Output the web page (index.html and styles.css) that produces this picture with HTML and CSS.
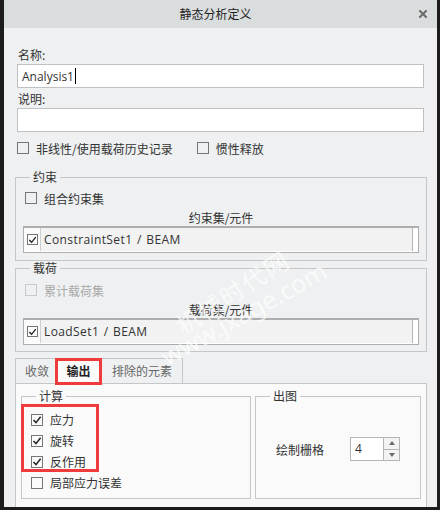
FILE: index.html
```html
<!DOCTYPE html>
<html lang="zh-CN">
<head>
    <meta charset="UTF-8">
    <meta name="viewport" content="width=device-width, initial-scale=1.0">
    <title>静态分析定义</title>
    <link rel="stylesheet" href="styles.css">
</head>
<body>
    <div class="dialog">
        <!-- Barra de título -->
        <div class="titlebar">
            <span></span>
            <span class="title">静态分析定义</span>
            <span class="close">
                <svg width="8" height="8" viewBox="0 0 8 8"><path d="M1 1 L7 7 M7 1 L1 7" stroke="#6a6a6a" stroke-width="2" stroke-linecap="square"/></svg>
            </span>
        </div>

        <div class="content">
            <div class="form-label">名称:</div>
            <div class="text-input">Analysis1<span class="caret"></span></div>
            <div class="form-label second">说明:</div>
            <div class="text-input"></div>

            <div class="options">
                <div class="check-row"><span class="box"></span>非线性/使用载荷历史记录</div>
                <div class="check-row"><span class="box"></span>惯性释放</div>
            </div>

            <!-- Grupo de restricciones -->
            <fieldset class="group first-group">
                <legend>约束</legend>
                <div class="group-body">
                    <div class="check-row"><span class="box"></span>组合约束集</div>
                    <div class="caption">约束集/元件</div>
                    <div class="list">
                        <div class="list-row">
                            <div class="cell-check"><span class="box checked"><svg width="10" height="10" viewBox="0 0 10 10"><path d="M1.5 5 L4 7.6 L8.6 1.8" fill="none" stroke="#222" stroke-width="1.5"/></svg></span></div>
                            <div class="cell-text">ConstraintSet1 / BEAM</div>
                        </div>
                    </div>
                </div>
            </fieldset>

            <!-- Grupo de cargas -->
            <fieldset class="group">
                <legend>载荷</legend>
                <div class="group-body second-body">
                    <div class="check-row disabled"><span class="box"></span>累计载荷集</div>
                    <div class="caption">载荷集/元件</div>
                    <div class="list">
                        <div class="list-row">
                            <div class="cell-check"><span class="box checked"><svg width="10" height="10" viewBox="0 0 10 10"><path d="M1.5 5 L4 7.6 L8.6 1.8" fill="none" stroke="#222" stroke-width="1.5"/></svg></span></div>
                            <div class="cell-text">LoadSet1 / BEAM</div>
                        </div>
                    </div>
                </div>
            </fieldset>

            <!-- Pestañas -->
            <div class="tabs">
                <div class="tab tab-1">收敛</div>
                <div class="tab tab-2 active">输出</div>
                <div class="tab tab-3">排除的元素</div>
            </div>
        </div>

        <div class="pane">
            <fieldset class="group calc-group">
                <legend>计算</legend>
                <div class="calc-body">
                    <div class="highlight">
                        <div class="check-row tall"><span class="box"><svg width="10" height="10" viewBox="0 0 10 10"><path d="M1.5 5 L4 7.6 L8.6 1.8" fill="none" stroke="#222" stroke-width="1.5"/></svg></span>应力</div>
                        <div class="check-row tall"><span class="box"><svg width="10" height="10" viewBox="0 0 10 10"><path d="M1.5 5 L4 7.6 L8.6 1.8" fill="none" stroke="#222" stroke-width="1.5"/></svg></span>旋转</div>
                        <div class="check-row tall"><span class="box"><svg width="10" height="10" viewBox="0 0 10 10"><path d="M1.5 5 L4 7.6 L8.6 1.8" fill="none" stroke="#222" stroke-width="1.5"/></svg></span>反作用</div>
                    </div>
                    <div class="check-row tall"><span class="box"></span>局部应力误差</div>
                </div>
            </fieldset>
            <fieldset class="group plot-group">
                <legend>出图</legend>
                <div class="plot-body">
                    <span>绘制栅格</span>
                    <div class="spin">
                        <div class="spin-value">4</div>
                        <div class="spin-btns">
                            <div class="spin-btn"><svg width="6" height="4" viewBox="0 0 6 4"><path d="M0 4 L3 0 L6 4 Z" fill="#6a6a6a"/></svg></div>
                            <div class="spin-btn"><svg width="6" height="4" viewBox="0 0 6 4"><path d="M0 0 L6 0 L3 4 Z" fill="#6a6a6a"/></svg></div>
                        </div>
                    </div>
                </div>
            </fieldset>
        </div>

        <!-- Marca de agua -->
        <div class="watermark wm-1">机械时代网</div>
        <div class="watermark wm-2">www.jxage.com</div>
    </div>
</body>
</html>
```

FILE: styles.css
```css
/* Estilos generales */
body {
    margin: 0;
    width: 440px;
    height: 510px;
    overflow: hidden;
    background-color: #1c1c1c;
    font-family: "Noto Sans CJK SC", "Noto Sans", sans-serif;
    font-size: 12px;
    color: #333;
}

.dialog {
    position: relative;
    margin-left: 4px;
    width: 433px;
    height: 507px;
    background-color: #eef0f1;
    display: flex;
    flex-direction: column;
    overflow: hidden;
}

/* Barra de título */
.titlebar {
    height: 28px;
    background-color: #dadddd;
    display: grid;
    grid-template-columns: 1fr auto 1fr;
    align-items: center;
    padding-right: 10px;
}

.title {
    color: #1e1e1e;
    line-height: 28px;
}

.close {
    justify-self: end;
    display: flex;
    margin-top: -1px;
}

.content {
    padding: 0 10px 0 11px;
}

.form-label {
    margin-top: 18px;
    padding-left: 3px;
    line-height: 18px;
}

.form-label.second {
    margin-top: 2px;
}

.text-input {
    height: 24px;
    box-sizing: border-box;
    margin: 0 3px 0 2px;
    border: 1px solid #bfc1c3;
    background-color: #fff;
    padding-left: 4px;
    font-family: "Open Sans", sans-serif;
    color: #333;
    display: flex;
    align-items: center;
}

.caret {
    width: 1px;
    height: 16px;
    background-color: #000;
    margin-left: 1px;
}

/* Casillas */
.options {
    display: flex;
    gap: 24px;
    margin-top: 7px;
    padding-left: 2px;
}

.check-row {
    display: flex;
    align-items: center;
    gap: 7px;
    height: 18px;
    white-space: nowrap;
}

.check-row.tall {
    height: 21px;
}

.box {
    width: 12px;
    height: 12px;
    box-sizing: border-box;
    border: 1px solid #767676;
    display: flex;
    align-items: center;
    justify-content: center;
    flex-shrink: 0;
}

.disabled {
    color: #a9a9a9;
}

.disabled .box {
    border-color: #c9c9c9;
}

/* Grupos */
.group {
    margin: 0;
    padding: 0;
    min-width: 0;
    border: 1px solid #c6c6c6;
}

.group legend {
    margin-left: 14px;
    padding: 0 3px;
    line-height: 14px;
    color: #333;
}

.first-group {
    margin-top: 13px;
}

.group-body {
    padding: 5px 7px 7px 7px;
}

.second-body {
    padding-top: 6px;
    padding-bottom: 6px;
}

.group-body .check-row {
    margin-left: 2px;
}

.caption {
    margin-top: 3px;
    line-height: 16px;
    text-align: center;
}

.list {
    height: 27px;
    box-sizing: border-box;
    border: 1px solid #aeaeae;
    border-top-width: 2px;
    background-color: #fff;
    padding: 0 5px 1px 0;
}

.list-row {
    display: flex;
    height: 100%;
}

.cell-check {
    width: 16px;
    display: flex;
    align-items: center;
    justify-content: center;
    background-color: #fbfbfb;
    border-right: 1px solid #cfcfcf;
}

.cell-check .box {
    width: 11px;
    height: 11px;
}

.cell-text {
    flex: 1;
    background-color: #f2f2f2;
    border-right: 1px solid #b5b5b5;
    padding-left: 3px;
    display: flex;
    align-items: center;
    font-family: "Open Sans", sans-serif;
    letter-spacing: 0.4px;
    word-spacing: 1px;
    color: #333;
}

/* Pestañas */
.tabs {
    display: flex;
    align-items: flex-start;
    margin-top: 6px;
    height: 25px;
}

.tab {
    height: 25px;
    box-sizing: border-box;
    border: 1px solid #c6c6c6;
    border-bottom: none;
    line-height: 24px;
    text-align: center;
    color: #666;
    background-color: #eef0f1;
}

.tab-1 {
    width: 40px;
    padding-left: 3px;
    border-right: none;
}

.tab-2 {
    width: 47px;
}

.tab-3 {
    width: 81px;
    border-left: none;
}

.tab.active {
    position: relative;
    z-index: 1;
    height: 27px;
    background-color: #fafafa;
    color: #222;
    font-weight: bold;
    outline: 3px solid #f03b3d;
    outline-offset: -3px;
}

.pane {
    flex: 1;
    margin: 0 10px 0 11px;
    background-color: #fafafa;
    border: 1px solid #c6c6c6;
    border-bottom: none;
    padding: 5px 5px 0 5px;
    display: flex;
    align-items: flex-start;
    gap: 4px;
}

.calc-group {
    width: 230px;
    box-sizing: border-box;
}

.plot-group {
    flex: 1;
    align-self: stretch;
    margin-bottom: 8px;
}

.calc-body {
    padding: 6px 0 5px 9px;
}

.highlight {
    position: relative;
}

.highlight::after {
    content: "";
    position: absolute;
    left: -10px;
    top: -5px;
    bottom: 0;
    width: 78px;
    box-sizing: border-box;
    border: 3px solid #f03b3d;
}

.plot-body {
    display: flex;
    align-items: center;
    gap: 26px;
    padding: 34px 0 0 20px;
}

/* Control numérico */
.spin {
    display: flex;
    height: 24px;
}

.spin-value {
    width: 34px;
    box-sizing: border-box;
    border: 1px solid #b5b5b5;
    background-color: #fff;
    padding-left: 4px;
    line-height: 22px;
    font-family: "Open Sans", sans-serif;
}

.spin-btns {
    width: 16px;
    display: flex;
    flex-direction: column;
    box-sizing: border-box;
    border: 1px solid #b5b5b5;
    border-left: none;
}

.spin-btn {
    flex: 1;
    display: flex;
    align-items: center;
    justify-content: center;
    background-color: #f3f3f3;
}

.spin-btn + .spin-btn {
    border-top: 1px solid #b5b5b5;
}

/* Marca de agua */
.watermark {
    position: absolute;
    color: rgba(255, 255, 255, 0.7);
    white-space: nowrap;
    pointer-events: none;
    z-index: 2;
}

.wm-1 {
    left: 163px;
    top: 274px;
    font-size: 24px;
    letter-spacing: 2px;
    transform: rotate(-33deg);
}

.wm-2 {
    left: 147px;
    top: 296px;
    font-family: "Noto Sans", sans-serif;
    font-size: 25px;
    transform: rotate(-29deg);
}
```
